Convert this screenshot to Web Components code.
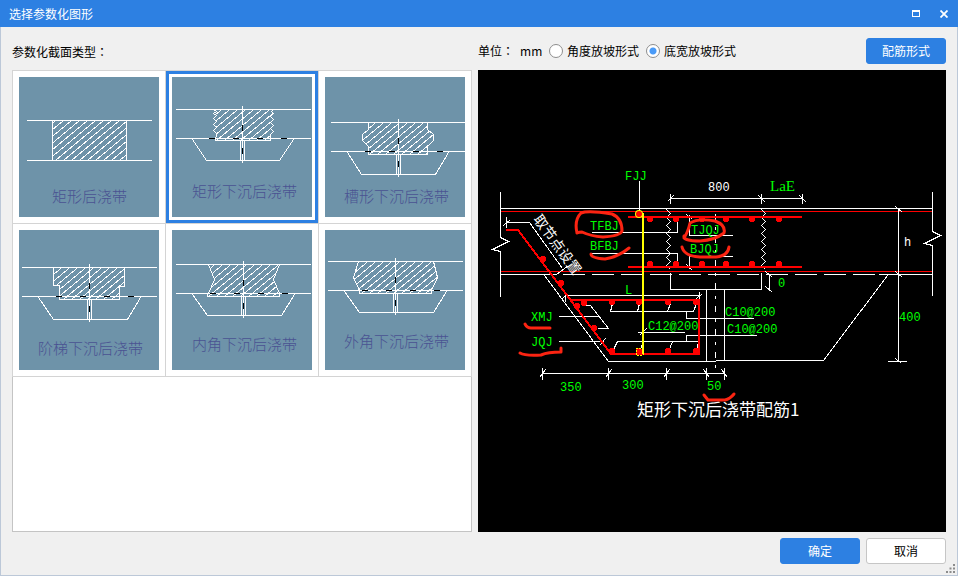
<!DOCTYPE html>
<html lang="zh-CN">
<head>
<meta charset="utf-8">
<title>选择参数化图形</title>
<style>
  html, body { margin: 0; }
  body { font: 12px/16px "Noto Sans CJK SC", sans-serif; color: #000; background: #f0f0f0; }
  .colon { font-family: "Noto Sans CJK TC", sans-serif; }
</style>
</head>
<body>
<dialog-window>
  <title-bar slot="title">选择参数化图形</title-bar>
  <span slot="caption">参数化截面类型<span class="colon" lang="zh-TW">：</span></span>
  <unit-options slot="tools"></unit-options>
  <section-gallery slot="gallery">
    <section-card kind="rect">矩形后浇带</section-card>
    <section-card kind="rectSunk" selected>矩形下沉后浇带</section-card>
    <section-card kind="groove">槽形下沉后浇带</section-card>
    <section-card kind="step">阶梯下沉后浇带</section-card>
    <section-card kind="inner">内角下沉后浇带</section-card>
    <section-card kind="outer">外角下沉后浇带</section-card>
  </section-gallery>
  <rebar-drawing slot="drawing"></rebar-drawing>
  <push-button slot="actions" primary>确定</push-button>
  <push-button slot="actions">取消</push-button>
</dialog-window>

<script>
function attach(el, html) {
  const t = document.createElement('template');
  t.innerHTML = html;
  el.attachShadow({ mode: 'open' }).append(t.content.cloneNode(true));
}

customElements.define('dialog-window', class extends HTMLElement {
  constructor() {
    super();
    attach(this, `<style>
      :host { display: grid; grid-template-rows: auto 1fr; min-height: 100vh; box-sizing: border-box; }
      .body { display: grid; grid-template-columns: 460fr 468fr; grid-template-rows: 43px 1fr auto;
        column-gap: 6px; padding: 0 11px 11px; border: solid #bcc8d8; border-width: 0 1px 1px; position: relative; }
      .caption { align-self: center; padding-top: 6px; }
      .tools { display: flex; align-items: center; }
      .tools ::slotted(*) { flex: 1; }
      .actions { grid-column: 1 / -1; display: flex; justify-content: flex-end; gap: 6px; padding-top: 6px; }
      .grip { position: absolute; right: 2px; bottom: 2px; display: block; }
    </style>
    <slot name="title"></slot>
    <main class="body">
      <div class="caption"><slot name="caption"></slot></div>
      <div class="tools"><slot name="tools"></slot></div>
      <slot name="gallery"></slot>
      <slot name="drawing"></slot>
      <div class="actions"><slot name="actions"></slot></div>
      <svg class="grip" width="9" height="9" fill="#8c8c8c"><path d="M7 0h2v2h-2zM7 3.5h2v2h-2zM7 7h2v2h-2zM3.500 3.500h2v2h-2zM3.500 7h2v2h-2zM0 7h2v2h-2z"/></svg>
    </main>`);
  }
});

customElements.define('title-bar', class extends HTMLElement {
  constructor() {
    super();
    attach(this, `<style>
      :host { display: flex; align-items: center; height: 27px; padding-left: 9px; background: #2d80e2; color: #fff; }
      h1 { flex: 1; margin: 0; font: inherit; }
      button { width: 28px; height: 27px; padding: 0; border: 0; background: none; color: inherit; display: grid; place-items: center; }
    </style>
    <h1><slot></slot></h1>
    <button type="button" aria-label="最大化"><svg width="8" height="8" shape-rendering="crispEdges"><path d="M0 0h8v7h-8zM1 2v4h6v-4z" fill="#fff" fill-rule="evenodd"/></svg></button>
    <button type="button" aria-label="关闭"><svg width="8" height="8"><path d="M.5 .5L7.500 7.500M7.500 .5L.5 7.500" stroke="#fff" stroke-width="1.800"/></svg></button>`);
  }
});

customElements.define('push-button', class extends HTMLElement {
  constructor() {
    super();
    attach(this, `<style>
      :host { display: block; }
      button { min-width: 80px; height: 26px; padding: 0 12px; box-sizing: border-box; border: 1px solid #c6c6c6;
        border-radius: 3px; background: #fff; color: #000; font: inherit; }
      :host([primary]) button { border-color: #2d80e2; background: #2d80e2; color: #fff; }
    </style><button type="button"><slot></slot></button>`);
  }
});

customElements.define('unit-options', class extends HTMLElement {
  constructor() {
    super();
    attach(this, `<style>
      :host { display: flex; align-items: center; padding-top: 4px; }
      .unit { width: 71px; display: flex; gap: 6px; }
      .colon { font-family: "Noto Sans CJK TC", sans-serif; }
      label { display: flex; align-items: center; gap: 4px; margin-right: 7px; }
      input { appearance: none; width: 14px; height: 14px; margin: 0; box-sizing: border-box;
        border: 1px solid #8e8e8e; border-radius: 50%; background: #fff; }
      input:checked { background: radial-gradient(circle, #4a9bf8 3px, #fff 4px); }
      push-button { margin-left: auto; }
    </style>
    <div class="unit"><span>单位<span class="colon" lang="zh-TW">：</span></span><span>mm</span></div>
    <label><input type="radio" name="slope">角度放坡形式</label>
    <label><input type="radio" name="slope" checked>底宽放坡形式</label>
    <push-button primary>配筋形式</push-button>`);
  }
});

customElements.define('section-gallery', class extends HTMLElement {
  constructor() {
    super();
    attach(this, `<style>
      :host { display: grid; grid-template-columns: repeat(3, 1fr); gap: 1px; align-content: start;
        background: #fff; border: 1px solid #c4c4c4; }
    </style><slot></slot>`);
  }
});

/* Each section: hatched outline, slab line heights, pit outline, centre line and caption origin. */
const SECTIONS = {
  rect: { shape: '33,43 107,43 107,83 33,83', top: 43, mid: 83, x: [7, 132], text: [33, 125] },
  rectSunk: { shape: '41,32 44,34 41,36 44,38 41,41 44,44 41,47 44,50 41,53 44,56 43,63 98,63 98,57 101,54 98,51 101,48 98,45 101,42 98,39 101,36 99,34 101,32',
    top: 32, mid: 61, bottom: 63, x: [3, 138], c: 70, pit: [20, 34, 107, 121, 83], text: [20, 120] },
  groove: { shape: '43,45 43,52 37,57 37,63 43,69 43,77 102,77 102,69 108,63 108,57 102,52 102,45',
    top: 45, mid: 74, bottom: 77, x: [5, 140], c: 73, pit: [22, 36, 110, 123, 97], text: [19, 125] },
  step: { shape: '34,37 34,55 40,55 40,69 100,69 100,56 105,56 105,37',
    top: 37, mid: 66, bottom: 69, x: [2, 137], c: 70, pit: [19, 34, 108, 121, 89], text: [19, 124] },
  inner: { shape: '36,34 42,49 36,63 35,63 35,66 107,66 107,63 101,49 107,34',
    top: 34, mid: 63, bottom: 66, x: [3, 138], c: 71, pit: [20, 35, 109, 122, 85], text: [20, 120] },
  outer: { shape: '33,31 28,47 34,60 34,63 106,63 106,60 112,47 108,31',
    top: 31, mid: 60, bottom: 63, x: [2, 137], c: 70, pit: [19, 34, 108, 121, 82], text: [19, 117] }
};

customElements.define('section-card', class extends HTMLElement {
  constructor() {
    super();
    const s = SECTIONS[this.getAttribute('kind')];
    const low = s.bottom || s.mid;
    let hatch = '';
    for (let x = -20; x < 150; x += 8) hatch += `M${x} ${low}l60 -50`;
    let pit = '', dashes = '';
    if (s.pit) {
      const [a, b, c, d, y] = s.pit;
      pit = `M${a} ${s.mid + 1}L${b} ${y}H${c}L${d} ${s.mid + 1}M${s.c} ${s.top - 4}V${y + 2}M${s.c - 2} ${low}V${y}M${s.c + 2} ${low}V${y}`;
      for (const dx of [-34, -10, 14, 38]) dashes += `M${s.c + dx} ${s.mid}h6`;
      dashes += `M${s.c} ${s.top + 15}v6M${s.c} ${s.mid + 9}v6`;
    }
    attach(this, `<style>
      :host { display: block; box-shadow: 0 0 0 1px #d4d4d4; background: #fff; }
      button { display: block; width: 100%; padding: 3px; border: 3px solid transparent; background: none; font: inherit; }
      :host([selected]) button { border-color: #2d80e2; }
      svg { display: block; width: 100%; background: #6e93a9; }
      text { font: 15px "Noto Sans CJK SC", sans-serif; font-weight: 300; fill: #4a5292; }
      .w { fill: none; stroke: #fff; }
    </style>
    <button type="button"><svg viewBox="0 0 140 140">
      <clipPath id="c"><polygon points="${s.shape}"/></clipPath>
      <g shape-rendering="crispEdges" transform="translate(.5 .5)">
        <path class="w" clip-path="url(#c)" d="${hatch}"/>
        <polygon class="w" points="${s.shape}"/>
        <path class="w" d="M${s.x[0]} ${s.top}H${s.x[1]}M${s.x[0]} ${s.mid}H${s.x[1]}${pit}"/>
        <path fill="none" stroke="#000" d="${dashes}"/>
      </g>
      <text x="${s.text[0]}" y="${s.text[1]}">${this.textContent}</text>
    </svg></button>`);
  }
});

const dots = list => list.map(([x, y]) => `<circle cx="${x}" cy="${y}" r="3"/>`).join('');
function zigzag(x, w, from, to) {
  let d = `M${x} ${from}`;
  for (let y = from + 4, i = 1; y <= to; y += 4, i++) d += `L${i % 2 ? x + w : x} ${y}`;
  return d;
}

customElements.define('rebar-drawing', class extends HTMLElement {
  constructor() {
    super();
    const bars = [650, 676, 702, 726, 752, 779];
    attach(this, `<style>
      :host { display: block; background: #000; }
      svg { display: block; width: 100%; height: 100%; }
      text { font: 12px "Liberation Mono", monospace; fill: #0f0; }
      .white { fill: #fff; }
      .large { font: 15px "Liberation Serif", serif; }
      .note { font: 14px "Noto Sans CJK SC", sans-serif; fill: #fff; }
      .name { font: 16px "Noto Sans CJK SC", sans-serif; fill: #fff; }
      path { fill: none; }
      .w { stroke: #fff; }
      .r { stroke: #f00; }
      .mark { stroke: #fb2412; stroke-width: 3; stroke-linecap: round; stroke-linejoin: round; }
    </style>
    <svg viewBox="478 70 468 462" role="img" aria-label="矩形下沉后浇带配筋1">
      <g shape-rendering="crispEdges" transform="translate(.5 .5)">
        <path class="r" d="M500 211H932M500 271H932"/>
        <path class="w" d="M500 208H932M500 274H556M878 274H932M544 275L608 361H715M715 360H823L887 275"/>
        <path class="w" stroke-dasharray="22 7" d="M562 274H878"/>
        <path class="w" d="M500 191V237L508 241L492 249L500 251V296M932 191V231L940 235L924 243L932 245V295"/>
        <path class="w" d="M506 222H529L562 268M506 216V227M503 225L510 219M556 274L568 265"/>
        <path class="w" d="M670 198H802M670 193V203M761 193V203M802 193V203M667 201L673 195M758 195L765 202M799 195L806 202"/>
        <path class="w" d="${zigzag(666, 4, 209, 272)}${zigzag(761, 4, 209, 272)}"/>
        <path class="w" d="M670 272V289H761V272M706 289V361M724 289V360M765 271L772 277M769 275V290M765 286L772 292"/>
        <path class="w" stroke-dasharray="6 7 3 7" d="M715 213V367"/>
        <path class="w" d="M639 180V210M591 232H677V221M591 253H677V262M688 235H732M689 214V235M686 214L692 219M688 256H732M689 256V268M686 264L692 270"/>
        <path class="w" d="M565 295H699M565 291V301M562 298L568 293M699 291V301M696 298L702 293"/>
        <path class="w" d="M584 305H590L608 328H597M558 316H599M558 341H602M599 345L605 338"/>
        <path class="w" d="M612 303L610 311H693L696 303M667 311L670 303M637 311L639 303M612 351L617 341H698L696 351M668 351L672 341M639 351L643 341"/>
        <path class="w" d="M686 311V318H753M686 341V335H756M637 332H684M639 335L646 328"/>
        <path class="w" d="M898 208V361M887 361H906M895 206L902 212M895 271L902 277M895 358L901 363"/>
        <path class="w" d="M542 373H724M542 367V379M608 367V379M666 367V379M706 367V379M724 367V379M539 377L545 369M605 377L611 369M663 377L669 369M703 369L709 377M721 369L727 377"/>
      </g>
      <g shape-rendering="crispEdges">
        <path class="r" stroke-width="2" d="M628 217H802M628 267H802M506 230H518L611 354H699V300H570"/>
        <path stroke="#ff0" stroke-width="2" d="M643 213V354"/>
        <g fill="#f00">
          ${dots(bars.map(x => [x, 219]))}${dots(bars.map(x => [x, 264]))}
          ${dots([[543, 259], [561, 283], [577, 306], [584, 303], [594, 328], [612, 302], [639, 302], [668, 302], [696, 302], [612, 351], [639, 351], [668, 351], [696, 351]])}
        </g>
        <path stroke="#ff0" stroke-dasharray="2 1" d="M636 348H643V355H636Z"/>
      </g>
      <circle cx="639" cy="214" r="4" fill="#ff0"/>
      <circle cx="639" cy="214" r="3" fill="#f00"/>
      <text x="625" y="180">FJJ</text>
      <text class="white" x="708" y="191">800</text>
      <text class="large" x="770" y="191">LaE</text>
      <text x="590" y="230">TFBJ</text>
      <text x="590" y="250">BFBJ</text>
      <text x="691" y="234">TJQJ</text>
      <text x="690" y="253">BJQJ</text>
      <text class="white" x="904" y="246">h</text>
      <text x="778" y="287">0</text>
      <text x="625" y="294">L</text>
      <text x="531" y="321">XMJ</text>
      <text x="531" y="346">JQJ</text>
      <text x="648" y="330">C12@200</text>
      <text x="725" y="316">C10@200</text>
      <text x="727" y="333">C10@200</text>
      <text x="899" y="321">400</text>
      <text x="560" y="391">350</text>
      <text x="622" y="389">300</text>
      <text x="707" y="390">50</text>
      <text class="note" transform="translate(541 222) rotate(54)" x="-7" y="5">取节点设置</text>
      <text class="name" x="637" y="416" style="font-size:17px">矩形下沉后浇带配筋1</text>
      <path class="mark" d="M577 233Q574 220 581 213Q588 210 612 214Q622 218 622 231Q620 236 603 237Q590 236 582 232Q579 232 577 233M591 254Q591 258 605 259Q618 257 629 248"/>
      <path class="mark" d="M684 236Q683 241 700 241Q715 240 724 233Q726 225 715 221Q698 218 690 223Q688 232 684 238M682 247Q684 256 700 257H716Q728 256 729 247"/>
      <path class="mark" d="M525 324Q527 328 531 328H550M520 353Q525 356 541 355Q548 352 561 352V348M704 395L708 400H725Q730 399 734 394"/>
    </svg>`);
  }
});
</script>
</body>
</html>
